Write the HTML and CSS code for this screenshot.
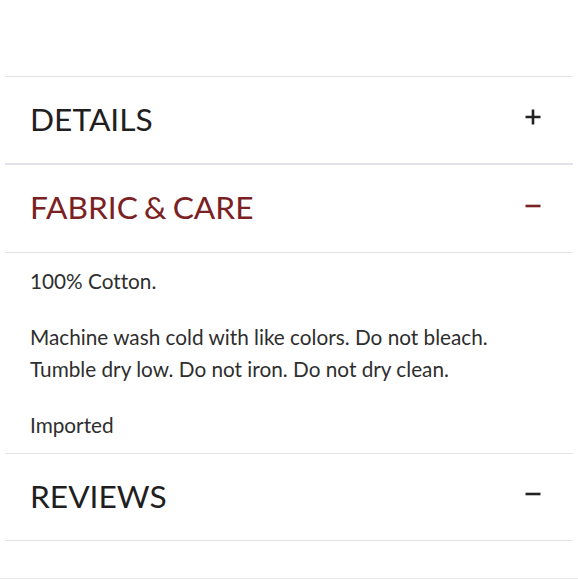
FILE: index.html
```html
<!DOCTYPE html>
<html>
<head>
<meta charset="utf-8">
<link rel="stylesheet" href="styles.css">
</head>
<body>
<div class="top-space"></div>
<div class="accordion">
  <section class="item first">
    <div class="head">
      <h2 class="title">DETAILS</h2>
      <svg class="icon" width="16" height="16" viewBox="0 0 16 16"><path d="M8 0.5V15.5M0.5 8H15.5" stroke="#222" stroke-width="2.6" fill="none"/></svg>
    </div>
  </section>
  <section class="item open">
    <div class="head tall">
      <h2 class="title red">FABRIC &amp; CARE</h2>
      <svg class="icon" width="16" height="16" viewBox="0 0 16 16"><path d="M0.5 8H15.5" stroke="#7b2123" stroke-width="2.6" fill="none"/></svg>
    </div>
    <div class="body">
      <p>100% Cotton.</p>
      <p>Machine wash cold with like colors. Do not bleach. Tumble dry low. Do not iron. Do not dry clean.</p>
      <p>Imported</p>
    </div>
  </section>
  <section class="item">
    <div class="head">
      <h2 class="title">REVIEWS</h2>
      <svg class="icon" width="16" height="16" viewBox="0 0 16 16"><path d="M0.5 8H15.5" stroke="#222" stroke-width="2.6" fill="none"/></svg>
    </div>
  </section>
</div>
<div class="bottom-space"></div>
</body>
</html>
```
FILE: styles.css
```css
html, body {
  margin: 0;
  padding: 0;
  background: #fff;
}
body {
  font-family: Lato, "Open Sans", sans-serif;
  color: #222;
  width: 578px;
}
.top-space {
  height: 76px;
}
.accordion {
  margin: 0 5px;
  border-top: 1px solid #e4e4e4;
}
.item {
  border-bottom: 1px solid #e4e4e4;
}
.item.first {
  border-bottom: 2px solid #e0e2e8;
}
.head {
  height: 86px;
  display: flex;
  align-items: center;
  justify-content: space-between;
  padding: 0 32px 0 25px;
}
.head.tall {
  height: 87px;
}
.title {
  margin: 0 0 2px 0;
  font-size: 31.7px;
  font-weight: 400;
  color: #1f1f1f;
  word-spacing: -2px;
}
.title.red {
  color: #7b2123;
  margin-bottom: 3px;
}
.icon {
  display: block;
  margin-top: -6px;
}
.body {
  border-top: 1px solid #e4e4e4;
  padding: 12px 25px 12px 25px;
  font-size: 20.75px;
  line-height: 32px;
  color: #2e2e2e;
  font-variant-ligatures: none;
}
.body p {
  margin: 0 0 24px 0;
}
.body p:last-child {
  margin-bottom: 0;
}
.bottom-space {
  height: 37px;
  border-bottom: 1px solid #e8e8e8;
}
```
